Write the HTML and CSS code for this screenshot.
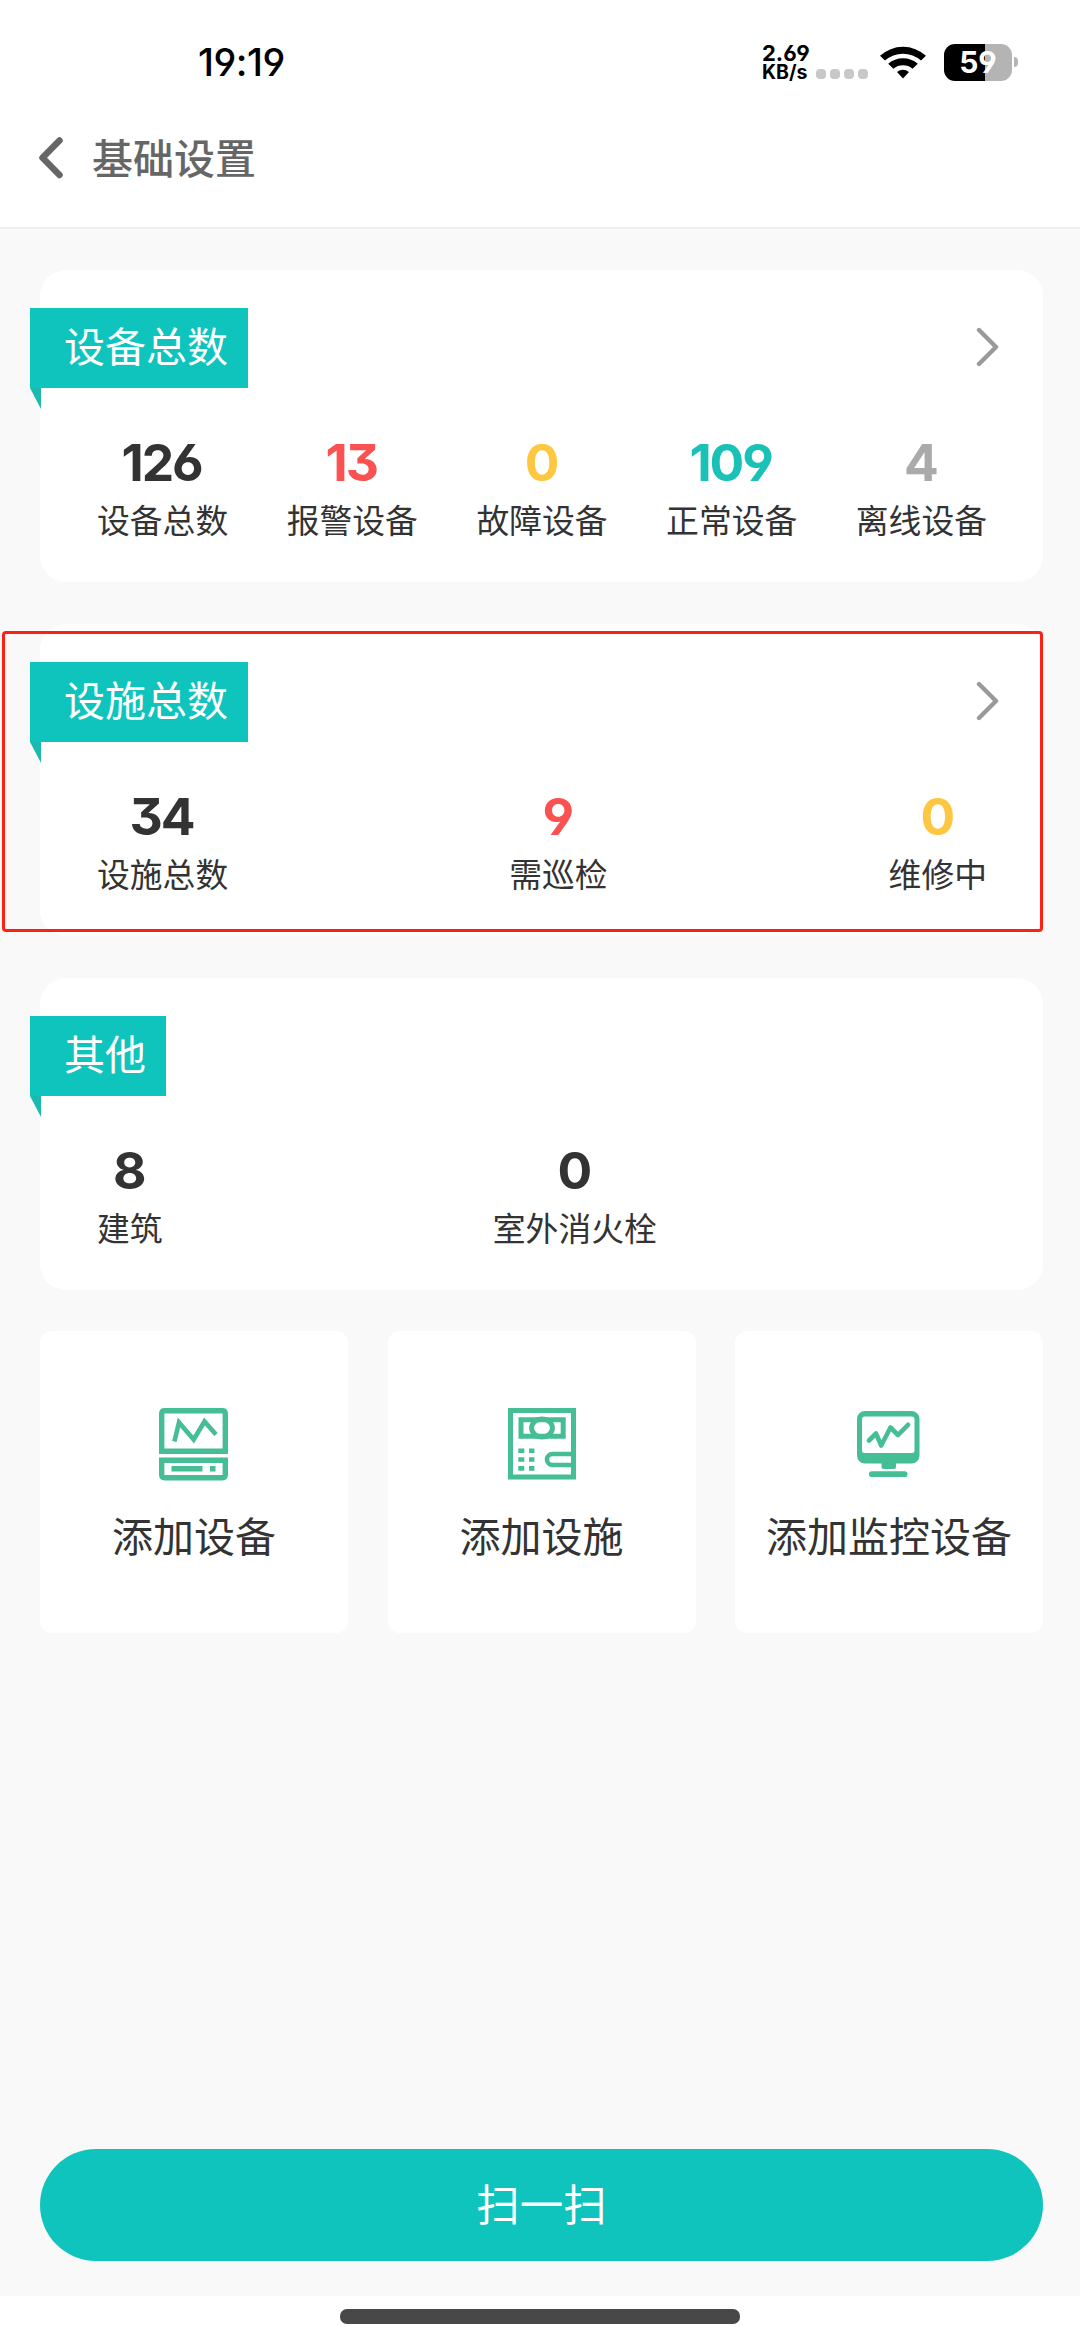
FILE: index.html
```html
<!DOCTYPE html>
<html lang="zh-CN">
<head>
<meta charset="utf-8">
<title>基础设置</title>
<link rel="stylesheet" href="styles.css">
</head>
<body>
<div class="screen">
  <div class="status">
    <div class="clock">19:19</div>
    <div class="status-icons">
      <div class="speed"><span class="speed-num">2.69</span><span class="speed-unit">KB/s</span></div>
      <div class="signal"><i></i><i></i><i></i><i></i></div>
      <svg class="wifi" width="46" height="34" viewBox="0 0 46 34">
        <path d="M0 10.8A34 34 0 0 1 46 10.8L41 15.6A27 27 0 0 0 5 15.6Z"/>
        <path d="M8.2 18.8A22.5 22.5 0 0 1 37.8 18.8L32.6 23.8A15 15 0 0 0 13.4 23.8Z"/>
        <path d="M17 27Q23 22.4 29 27L23 33.6Z"/>
      </svg>
      <div class="battery"><span>59</span></div>
      <i class="nub"></i>
    </div>
  </div>
  <header class="header">
    <svg class="back" width="26" height="42" viewBox="0 0 26 42"><path d="M21.5 3.5 4.5 20.7 21.5 38"/></svg>
    <h1>基础设置</h1>
  </header>

  <main class="content">
    <section class="card">
      <div class="card-head">
        <h2 class="ribbon">设备总数</h2>
        <svg class="more" width="24" height="40" viewBox="0 0 24 40"><path d="M3 3 20 20 3 37"/></svg>
      </div>
      <div class="stats">
        <div class="stat"><b>126</b><span>设备总数</span></div>
        <div class="stat red"><b>13</b><span>报警设备</span></div>
        <div class="stat yellow"><b>0</b><span>故障设备</span></div>
        <div class="stat teal"><b>109</b><span>正常设备</span></div>
        <div class="stat gray"><b>4</b><span>离线设备</span></div>
      </div>
    </section>

    <section class="card">
      <div class="card-head">
        <h2 class="ribbon">设施总数</h2>
        <svg class="more" width="24" height="40" viewBox="0 0 24 40"><path d="M3 3 20 20 3 37"/></svg>
      </div>
      <div class="stats">
        <div class="stat"><b>34</b><span>设施总数</span></div>
        <div class="stat red"><b>9</b><span>需巡检</span></div>
        <div class="stat yellow"><b>0</b><span>维修中</span></div>
      </div>
      <div class="highlight"></div>
    </section>

    <section class="card">
      <div class="card-head"><h2 class="ribbon">其他</h2></div>
      <div class="stats">
        <div class="stat"><b>8</b><span>建筑</span></div>
        <div class="stat"><b>0</b><span>室外消火栓</span></div>
        <div class="stat"></div>
      </div>
    </section>

    <div class="tiles">
      <div class="tile">
        <svg width="76" height="76" viewBox="0 0 76 76">
          <g fill="none" stroke="#45bd95" stroke-width="5.4">
            <path d="M5.7 45.3V7.7Q5.7 4.7 8.7 4.7H66.3Q69.3 4.7 69.3 7.7V45.3Z"/>
            <path d="M5.7 54.2H69.3V68.8Q69.3 71.8 66.3 71.8H8.7Q5.7 71.8 5.7 68.8Z"/>
            <path d="M18.4 35.5 23 16.5 37.7 33.5 48.5 15.5 60 28.5" stroke-width="4.6"/>
            <path d="M15.5 62.8H46.5M54 62.8H59.5" stroke-width="5.4"/>
          </g>
        </svg>
        <p>添加设备</p>
      </div>
      <div class="tile">
        <svg width="76" height="76" viewBox="0 0 76 76">
          <g fill="none" stroke="#45bd95" stroke-width="5">
            <path d="M6.5 4.5H69.5V71H6.5Z"/>
            <path d="M17 13.8H59.2V30.3H17Z"/>
            <ellipse cx="38" cy="22" rx="10.4" ry="9"/>
            <path d="M69 48H48.5A5.5 5.5 0 0 0 48.5 59H69" stroke-width="4.6"/>
          </g>
          <path fill="#45bd95" d="M66.5 47.5H69V59.5H66.5Q69 53.5 66.5 47.5ZM14.3 42.5h6v4.6h-6zM25 42.5h5.4v4.6H25zM14.3 51.2h6v4.6h-6zM25 51.2h5.4v4.6H25zM14.3 60h6v4.8h-6zM25 60h5.4v4.8H25z"/>
        </svg>
        <p>添加设施</p>
      </div>
      <div class="tile">
        <svg width="76" height="76" viewBox="0 0 76 76">
          <path fill="#45bd95" fill-rule="evenodd" d="M14 5H60.500a8 8 0 0 1 8 8V49.500a8 8 0 0 1-8 8H45V61q0 2-2 2H32.500q-2 0-2-2V57.500H14a8 8 0 0 1-8-8V13a8 8 0 0 1 8-8ZM14 10.500Q11 10.500 11 13.500V44.500Q11 47 14 47H61Q63.500 47 63.500 44.500V13.500Q63.500 10.500 60.500 10.500Z"/>
          <rect x="18" y="65.300" width="38.500" height="5.700" rx="2.800" fill="#45bd95"/>
          <path d="M18 34.500 25 27.500 30.200 39.500 39.500 21.500 47 29 57 18.800" fill="none" stroke="#45bd95" stroke-width="4.600" stroke-linecap="round" stroke-linejoin="round"/>
        </svg>
        <p>添加监控设备</p>
      </div>
    </div>

    <button class="scan">扫一扫</button>
  </main>
  <footer class="nav"><i></i></footer>
</div>
</body>
</html>
```
FILE: styles.css
```css
* { box-sizing: border-box; margin: 0; padding: 0; }

body {
  font-family: "Noto Sans CJK SC", sans-serif;
  color: #333;
  background: #f9f9f9;
}

.screen {
  width: 1080px;
  height: 2340px;
  display: flex;
  flex-direction: column;
  overflow: hidden;
}

/* status bar */
.status {
  height: 124px;
  padding: 0 62px 0 198px;
  display: flex;
  justify-content: space-between;
  align-items: center;
  background: #fff;
  font-family: Inter, sans-serif;
  color: #000;
  font-feature-settings: "cv03", "cv04", "cv09";
}
.clock { font-size: 38.5px; font-weight: 500; letter-spacing: -0.5px; }
.status-icons { display: flex; align-items: center; }
.speed {
  width: 54px;
  display: flex;
  flex-direction: column;
  font-weight: 700;
  padding-top: 2px;
}
.speed-num { font-size: 22px; line-height: 19px; }
.speed-unit { font-size: 19.5px; line-height: 19px; }
.signal { display: flex; gap: 4px; margin-top: 24px; }
.signal i { width: 10px; height: 10px; border-radius: 4px; background: #c8c8c8; }
.wifi { margin: 0 18px 0 12px; }
.battery {
  width: 68px;
  height: 37px;
  border-radius: 11px;
  background: linear-gradient(90deg, #000 41px, #b4b4b4 41px);
  color: #fff;
  font-size: 30px;
  font-weight: 700;
  line-height: 37px;
  text-align: center;
}
.nub { width: 4px; height: 10px; margin-left: 2px; border-radius: 0 5px 5px 0; background: #b4b4b4; }

/* page header */
.header {
  height: 105px;
  padding: 0 38px 36px;
  display: flex;
  align-items: center;
  background: #fff;
  border-bottom: 2px solid #efefef;
}
.back { fill: none; stroke: #666; stroke-width: 6.5; stroke-linecap: round; stroke-linejoin: round; }
.header h1 { margin: -4px 0 0 28px; font-size: 41px; line-height: 60px; font-weight: 500; color: #666; }

.content {
  height: 2067px;
  padding: 41px 37px 35px 40px;
  display: flex;
  flex-direction: column;
}

/* summary cards */
.card {
  position: relative;
  height: 312px;
  margin-bottom: 42px;
  padding-top: 38px;
  border-radius: 26px;
  background: #fff;
  flex: none;
}
.card-head {
  display: flex;
  justify-content: space-between;
  align-items: center;
  padding-right: 43px;
}
.ribbon {
  position: relative;
  height: 80px;
  margin-left: -10px;
  padding: 0 20px 0 34px;
  background: #0fc4bd;
  color: #fff;
  font-size: 41px;
  font-weight: 400;
  line-height: 73px;
}
.ribbon::after {
  content: "";
  position: absolute;
  left: 0;
  top: 100%;
  width: 11px;
  height: 21px;
  background: #1cb9b0;
  clip-path: polygon(0 0, 100% 0, 100% 100%);
}
.more { margin-bottom: 3px; fill: none; stroke: #999; stroke-width: 4.4; stroke-linecap: round; stroke-linejoin: round; }
.stats {
  margin-top: 48px;
  padding: 0 56px 0 57px;
  display: flex;
  justify-content: space-between;
}
.stat { display: flex; flex-direction: column; align-items: center; }
.stat b {
  margin-left: -2px;
  font-family: Inter, sans-serif;
  font-feature-settings: "cv03", "cv04", "cv09";
  font-size: 51.5px;
  font-weight: 650;
  line-height: 52px;
  letter-spacing: -2px;
}
.stat span { margin-top: 11px; font-size: 32.8px; line-height: 40px; }
.red b { color: #fa5151; }
.yellow b { color: #fdc742; }
.teal b { color: #19c1b7; }
.gray b { color: #aaa; }

.highlight {
  position: absolute;
  left: -38px;
  top: 7px;
  width: 1041px;
  height: 301px;
  border: 3px solid #ff2014;
  border-radius: 4px;
}

/* add tiles */
.tiles { display: grid; grid-template-columns: repeat(3, 308px); justify-content: space-between; margin-top: -1px; }
.tile {
  height: 302px;
  padding-top: 75px;
  border-radius: 12px;
  background: #fff;
  display: flex;
  flex-direction: column;
  align-items: center;
}
.tile p { margin-top: 24px; font-size: 41px; line-height: 56px; }

.scan {
  height: 112px;
  margin-top: auto;
  padding-bottom: 5px;
  border: 0;
  border-radius: 56px;
  background: #0fc4bd;
  color: #fff;
  font: 400 43.5px/107px "Noto Sans CJK SC", sans-serif;
}

.nav {
  height: 44px;
  padding-top: 13px;
  display: flex;
  justify-content: center;
  background: #fff;
}
.nav i { width: 400px; height: 15px; border-radius: 7px; background: #484848; }
```
